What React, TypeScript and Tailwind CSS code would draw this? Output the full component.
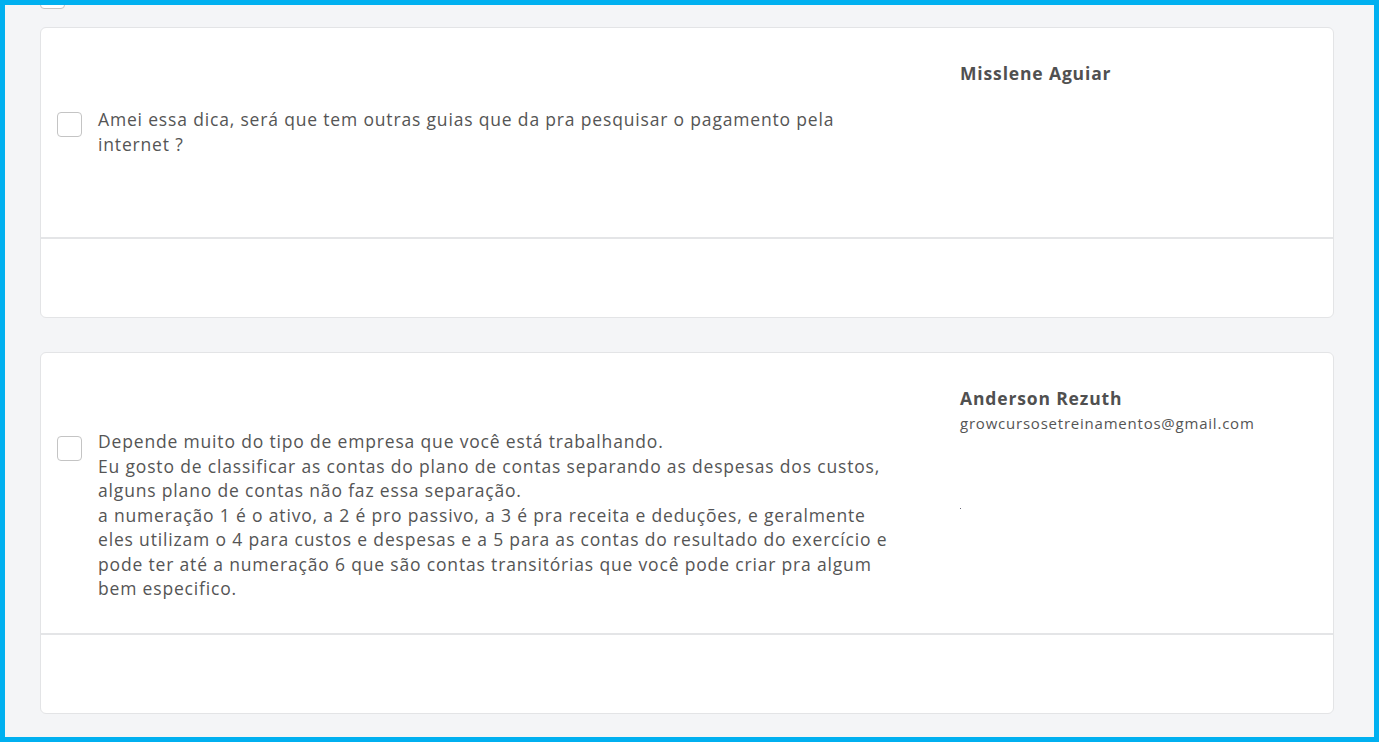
import React from "react";

const font = { fontFamily: '"Open Sans", "Noto Sans", sans-serif' };

function Box() {
  return <div className="w-[25px] h-[25px] shrink-0 rounded-[4px] border border-[#c4c4c4] bg-white" />;
}

function Card({
  lines,
  name,
  email,
  topH,
  textPt,
  boxMt,
  dot,
}: {
  lines: string[];
  name: string;
  email?: string;
  topH: string;
  textPt: string;
  boxMt: string;
  dot?: boolean;
}) {
  return (
    <div className="rounded-[6px] border border-[#e3e4e6] bg-white overflow-hidden">
      <div className={`flex ${topH}`}>
        <div className={`flex w-[919px] gap-4 pl-[16px] ${textPt}`}>
          <div className={boxMt}>
            <Box />
          </div>
          <div className="text-[17.5px] tracking-[0.83px] leading-[24.5px] text-[#555555] whitespace-nowrap">
            {lines.map((l, i) => (
              <div key={i}>{l}</div>
            ))}
          </div>
        </div>
        <div className="flex flex-col pt-[33px]">
          <div className="text-[17.5px] tracking-[0.85px] font-bold leading-[24px] text-[#505050]">{name}</div>
          {email && (
            <div className="text-[15px] tracking-[0.78px] leading-[20px] text-[#555555] mt-[3px]">{email}</div>
          )}
          {dot && <div className="mt-[75px] h-[1px] w-[1px] bg-[#667]" />}
        </div>
      </div>
      <div className="h-[2px] bg-[#e4e5e7]" />
      <div className="h-[78px]" />
    </div>
  );
}

export default function App() {
  return (
    <div style={font} className="w-[1379px] h-[742px] border-[5px] border-[#00b0f0] bg-[#f4f5f7] overflow-hidden">
      <div className="pl-[35px] pr-[40px]">
        <div className="flex items-center gap-[100px] mt-[-21px] h-[24px]">
          <Box />
          <span className="text-[16px] text-[#555]">&nbsp;</span>
        </div>
        <div className="mt-[19px] flex flex-col gap-[34px]">
          <Card
            lines={[
              "Amei essa dica, será que tem outras guias que da pra pesquisar o pagamento pela",
              "internet ?",
            ]}
            name="Misslene Aguiar"
            topH="h-[209px]"
            textPt="pt-[79px]"
            boxMt="mt-[5px]"
          />
          <Card
            lines={[
              "Depende muito do tipo de empresa que você está trabalhando.",
              "Eu gosto de classificar as contas do plano de contas separando as despesas dos custos,",
              "alguns plano de contas não faz essa separação.",
              "a numeração 1 é o ativo, a 2 é pro passivo, a 3 é pra receita e deduções, e geralmente",
              "eles utilizam o 4 para custos e despesas e a 5 para as contas do resultado do exercício e",
              "pode ter até a numeração 6 que são contas transitórias que você pode criar pra algum",
              "bem especifico.",
            ]}
            name="Anderson Rezuth"
            email="growcursosetreinamentos@gmail.com"
            topH="h-[280px]"
            textPt="pt-[76px]"
            boxMt="mt-[7px]"
            dot
          />
        </div>
      </div>
    </div>
  );
}
